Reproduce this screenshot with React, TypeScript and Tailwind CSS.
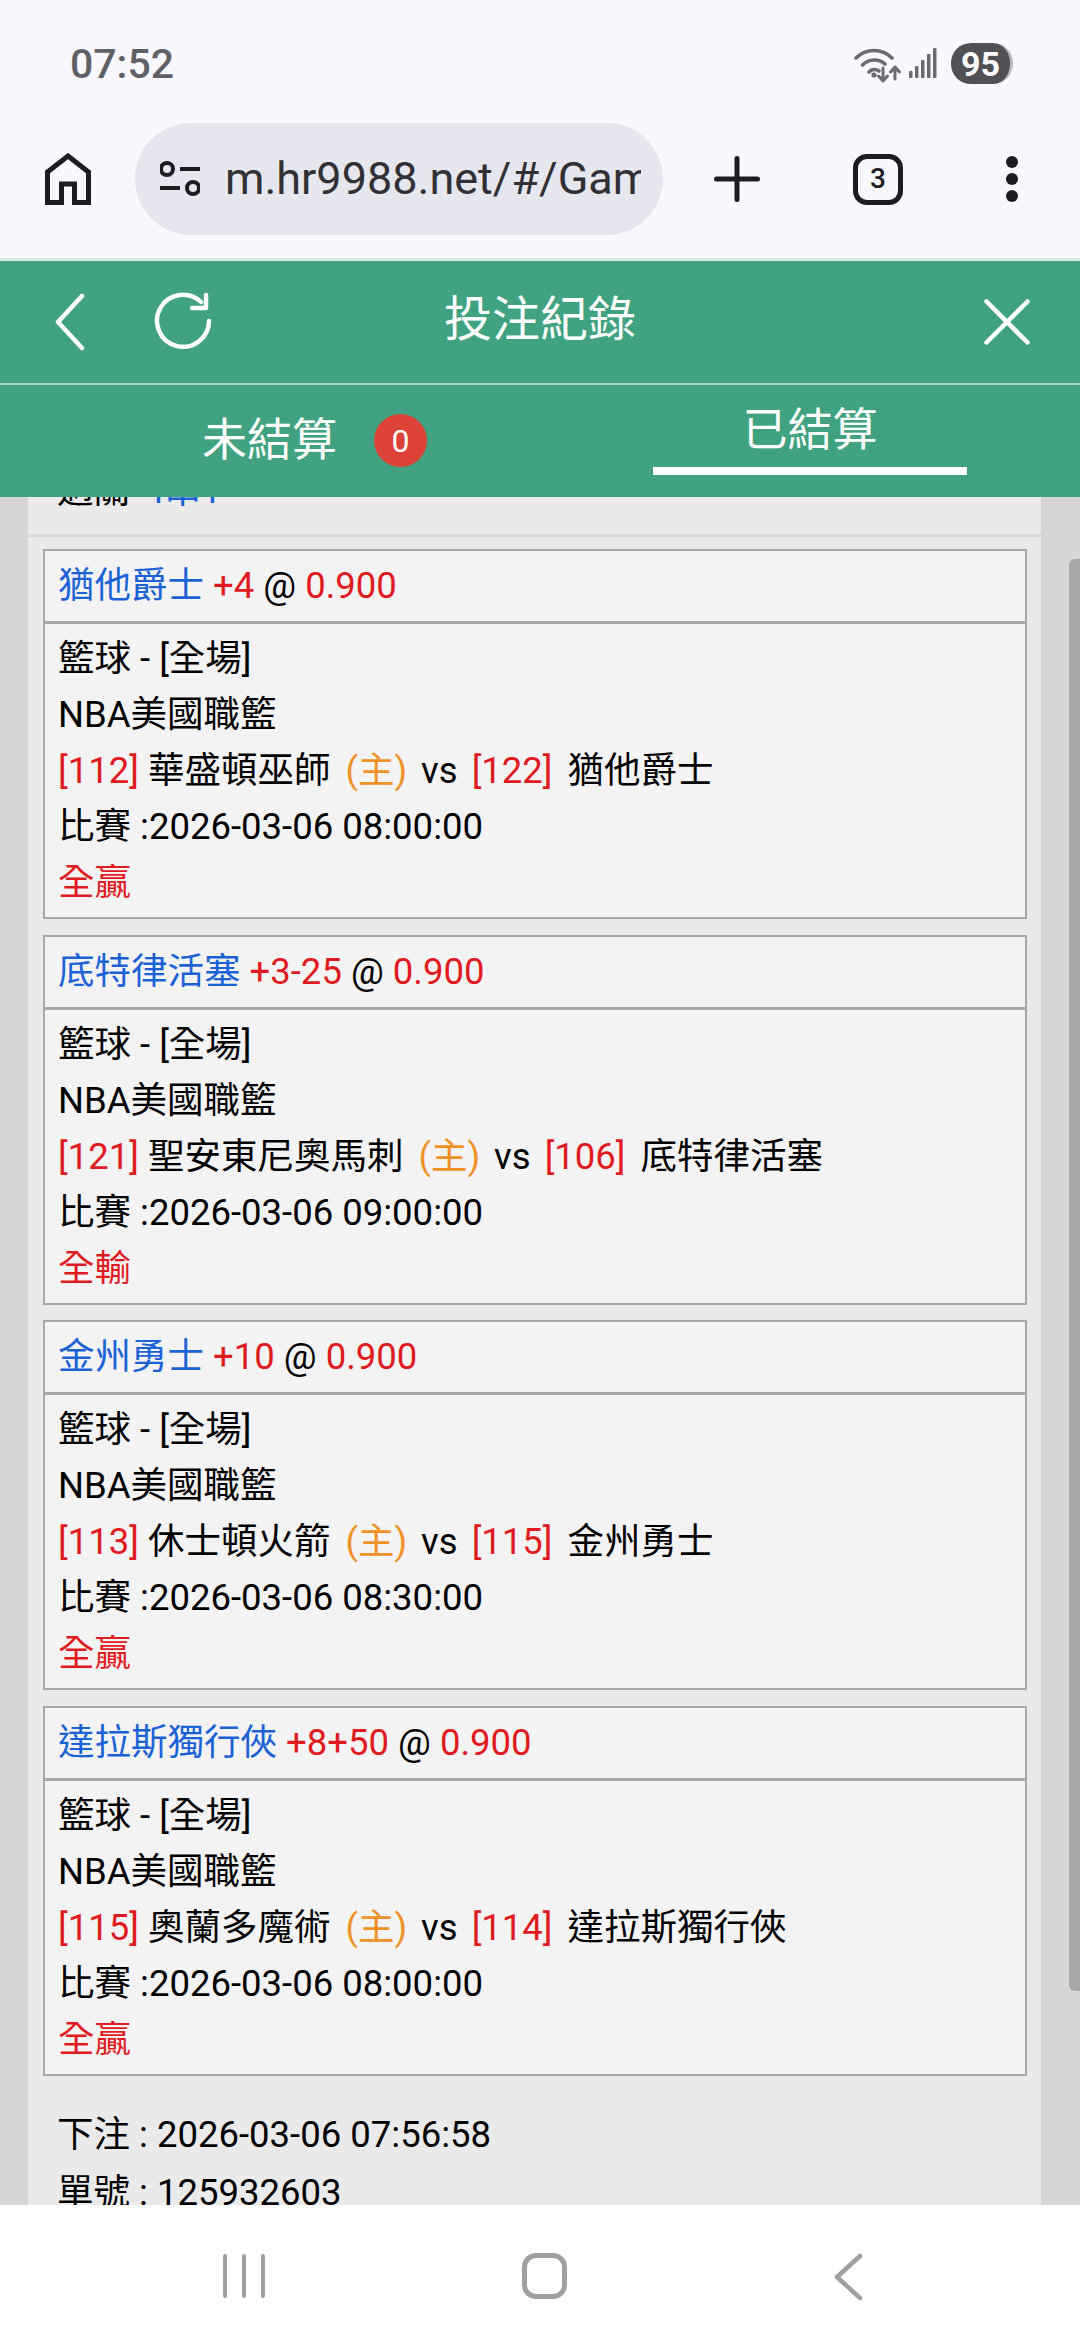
import React from "react";

const Blue = ({ children }: { children: React.ReactNode }) => <span className="text-[#1a62d6]">{children}</span>;
const Red = ({ children }: { children: React.ReactNode }) => <span className="text-[#e01b1f]">{children}</span>;

type Bet = {
  pick: string;
  line: string;
  homeNo: string;
  home: string;
  awayNo: string;
  away: string;
  time: string;
  result: string;
};

const bets: Bet[] = [
  { pick: "猶他爵士", line: "+4", homeNo: "[112]", home: "華盛頓巫師", awayNo: "[122]", away: "猶他爵士", time: "2026-03-06 08:00:00", result: "全贏" },
  { pick: "底特律活塞", line: "+3-25", homeNo: "[121]", home: "聖安東尼奧馬刺", awayNo: "[106]", away: "底特律活塞", time: "2026-03-06 09:00:00", result: "全輸" },
  { pick: "金州勇士", line: "+10", homeNo: "[113]", home: "休士頓火箭", awayNo: "[115]", away: "金州勇士", time: "2026-03-06 08:30:00", result: "全贏" },
  { pick: "達拉斯獨行俠", line: "+8+50", homeNo: "[115]", home: "奧蘭多魔術", awayNo: "[114]", away: "達拉斯獨行俠", time: "2026-03-06 08:00:00", result: "全贏" },
];

function BetCard({ bet }: { bet: Bet }) {
  return (
    <div className="h-[370px] bg-[#f3f3f3] border-2 border-[#a8a8a8] flex flex-col">
      <div className="h-[73px] shrink-0 border-b-[3px] border-[#a8a8a8] pl-[13px] flex items-center whitespace-pre">
        <Blue>{bet.pick}</Blue>
        <Red> {bet.line}</Red>
        <span> @ </span>
        <Red>0.900</Red>
      </div>
      <div className="pl-[13px] pt-[7px] text-black">
        <div className="h-[56px] leading-[56px]">籃球 - [全場]</div>
        <div className="h-[56px] leading-[56px]">NBA美國職籃</div>
        <div className="h-[56px] leading-[56px] whitespace-pre">
          <Red>{bet.homeNo}</Red>
          <span className="ml-[9px]">{bet.home}</span>
          <span className="ml-[15px] text-[#ef9127]">(主)</span>
          <span className="ml-[14px]">vs</span>
          <span className="ml-[14px]"><Red>{bet.awayNo}</Red></span>
          <span className="ml-[15px]">{bet.away}</span>
        </div>
        <div className="h-[56px] leading-[56px]">比賽 :{bet.time}</div>
        <div className="h-[56px] leading-[56px]"><Red>{bet.result}</Red></div>
      </div>
    </div>
  );
}

export default function App() {
  return (
    <div className="w-[1080px] h-[2340px] overflow-hidden flex flex-col bg-white [font-family:Roboto,'Noto_Sans_CJK_TC',sans-serif]">
      {/* browser chrome */}
      <div className="h-[261px] shrink-0 bg-[#f8f8fe] border-b-[3px] border-[#d3e8e1] flex flex-col">
        <div className="h-[123px] shrink-0 flex items-start justify-between pl-[70px] pr-[67px]">
          <span className="mt-[40px] text-[41px] leading-[48px] font-medium text-[#606166]">07:52</span>
          <div className="mt-[43px] flex items-start">
            <svg width="48" height="38" viewBox="0 0 48 38" fill="none" stroke="#6a6a70" strokeWidth="3.6" strokeLinecap="round" className="mt-[3px]">
              <path d="M2 12 C12 2 28 2 38 12" />
              <path d="M8.5 19 C15 12.5 25 12.5 31 18" />
              <path d="M15 26 C18 23 22 23 25 25" />
              <circle cx="20" cy="29" r="2.6" fill="#6a6a70" stroke="none" />
              <path d="M29 22 V35 M24.5 30 L29 35 L33.5 30" strokeWidth="3" strokeLinejoin="round" />
              <path d="M41 33 V21 M36.5 26 L41 21 L45.5 26" strokeWidth="3" strokeLinejoin="round" />
            </svg>
            <svg width="30" height="32" viewBox="0 0 30 32" fill="#6a6a70" className="ml-[6px] mt-[5px]">
              <rect x="1" y="23" width="3.5" height="7" rx="1" />
              <rect x="7" y="18" width="3.5" height="12" rx="1" />
              <rect x="13" y="12" width="3.5" height="18" rx="1" />
              <rect x="19" y="6" width="3.5" height="24" rx="1" />
              <rect x="25" y="0" width="3.5" height="30" rx="1" />
            </svg>
            <div className="ml-[13px] w-[62px] h-[41px] rounded-[20px] bg-[#505055] flex items-center justify-center border-r-[3px] border-[#b9b9bc] text-white font-bold text-[34px] leading-none">
              95
            </div>
          </div>
        </div>
        <div className="flex items-center h-[112px]">
          <svg width="46" height="52" viewBox="45 153 46 52" fill="none" stroke="#1c1c22" strokeWidth="5" className="ml-[45px]">
            <path d="M68 156 L88.5 172 V202.5 H74.5 V184 H61.5 V202.5 H47.5 V172 Z" />
          </svg>
          <div className="ml-[44px] w-[528px] h-[112px] rounded-[56px] bg-[#e6e6ee] flex items-center pl-[25px]">
            <svg width="40" height="36" viewBox="160 161 40 36" fill="none" stroke="#1c1c22" strokeWidth="4" className="shrink-0">
              <circle cx="167" cy="169" r="6" />
              <path d="M180 169 H200" />
              <path d="M160 188 H180" />
              <circle cx="193" cy="188" r="6" />
            </svg>
            <div className="ml-[25px] w-[416px] overflow-hidden whitespace-nowrap text-[45px] leading-[60px] text-[#303036]">
              m.hr9988.net/#/Game
            </div>
          </div>
          <svg width="46" height="46" viewBox="0 0 46 46" fill="none" stroke="#1c1c22" strokeWidth="5" strokeLinecap="round" className="ml-[51px]">
            <path d="M23 2.5 V43.5 M2.5 23 H43.5" />
          </svg>
          <div className="ml-[93px] w-[50px] h-[51px] rounded-[14px] border-[5px] border-[#1c1c22] flex items-center justify-center text-[28px] leading-none font-medium text-[#1c1c22]">
            3
          </div>
          <div className="ml-[103px] flex flex-col gap-[5px]">
            <div className="w-[12px] h-[12px] rounded-full bg-[#1c1c22]" />
            <div className="w-[12px] h-[12px] rounded-full bg-[#1c1c22]" />
            <div className="w-[12px] h-[12px] rounded-full bg-[#1c1c22]" />
          </div>
        </div>
      </div>

      {/* green header */}
      <div className="h-[236px] shrink-0 bg-[#40a280] text-white flex flex-col">
        <div className="h-[122px] shrink-0 grid grid-cols-[1fr_auto_1fr] items-center">
          <div className="flex items-center pl-[54px]">
            <svg width="32" height="58" viewBox="0 0 32 58" fill="none" stroke="white" strokeWidth="4.5" strokeLinecap="round" strokeLinejoin="round">
              <path d="M28 3 L4 29 L28 55" />
            </svg>
            <svg width="60" height="60" viewBox="0 0 60 60" fill="none" stroke="white" strokeWidth="4.5" strokeLinecap="round" strokeLinejoin="round" className="ml-[68px]">
              <path d="M55 29 A26 26 0 1 1 47 10" />
              <path d="M38 16 H52 V3" />
            </svg>
          </div>
          <div className="text-[48px] leading-[60px] text-center pb-[5px]">投注紀錄</div>
          <div className="flex justify-end pr-[50px]">
            <svg width="46" height="46" viewBox="0 0 46 46" fill="none" stroke="white" strokeWidth="4.5" strokeLinecap="round">
              <path d="M2.5 2.5 L43.5 43.5 M43.5 2.5 L2.5 43.5" />
            </svg>
          </div>
        </div>
        <div className="h-[2px] shrink-0 bg-[#a6d4c2]" />
        <div className="flex-1 flex items-start">
          <div className="w-[653px] shrink-0 flex items-center pl-[202px] pt-[29px]">
            <span className="text-[45px] leading-[52px]">未結算</span>
            <span className="ml-[37px] w-[53px] h-[53px] rounded-full bg-[#dc4238] flex items-center justify-center text-[32px] leading-none">0</span>
          </div>
          <div className="w-[314px] shrink-0 text-center">
            <div className="pt-[19px] h-[82px] text-[45px] leading-[54px]">已結算</div>
            <div className="h-[8px] bg-white" />
          </div>
        </div>
      </div>

      {/* scrolled page */}
      <div className="flex-1 min-h-0 overflow-hidden flex bg-[#d6d6d6] text-[36.5px] leading-[56px] text-black">
        <div className="w-[28px] shrink-0" />
        <div className="w-[1013px] shrink-0 bg-[#eaeaea]">
          <div className="-mt-[34px] px-[29px] pb-[15px] border-b-[3px] border-[#d9d9d9] whitespace-pre">
            過關 <span className="ml-[5px]"><Blue>4串1</Blue></span>
          </div>
          <div className="pt-[12px] pl-[15px] pr-[14px] flex flex-col gap-[15.5px]">
            {bets.map((b, i) => (
              <BetCard key={i} bet={b} />
            ))}
          </div>
          <div className="pt-[30px] px-[29px]">
            <div className="h-[58px] leading-[58px]">下注 : 2026-03-06 07:56:58</div>
            <div className="h-[58px] leading-[58px]">單號 : 125932603</div>
          </div>
        </div>
        <div className="flex-1 pl-[28px]">
          <div className="mt-[62px] h-[1432px] bg-[#a8a8a8] rounded-l-[6px]" />
        </div>
      </div>

      {/* android nav */}
      <div className="h-[135px] shrink-0 bg-white flex items-start pt-[48px]">
        <svg width="44" height="46" viewBox="0 0 44 46" fill="none" stroke="#a0a0a0" strokeWidth="4" strokeLinecap="round" className="ml-[222px]">
          <path d="M3 3 V43 M22 3 V43 M41 3 V43" />
        </svg>
        <div className="ml-[256px] w-[45px] h-[46px] rounded-[14px] border-[5px] border-[#a0a0a0]" />
        <svg width="30" height="48" viewBox="0 0 30 48" fill="none" stroke="#a0a0a0" strokeWidth="4.5" strokeLinecap="round" strokeLinejoin="round" className="ml-[266px]">
          <path d="M27 3 L4 24 L27 45" />
        </svg>
      </div>
    </div>
  );
}
